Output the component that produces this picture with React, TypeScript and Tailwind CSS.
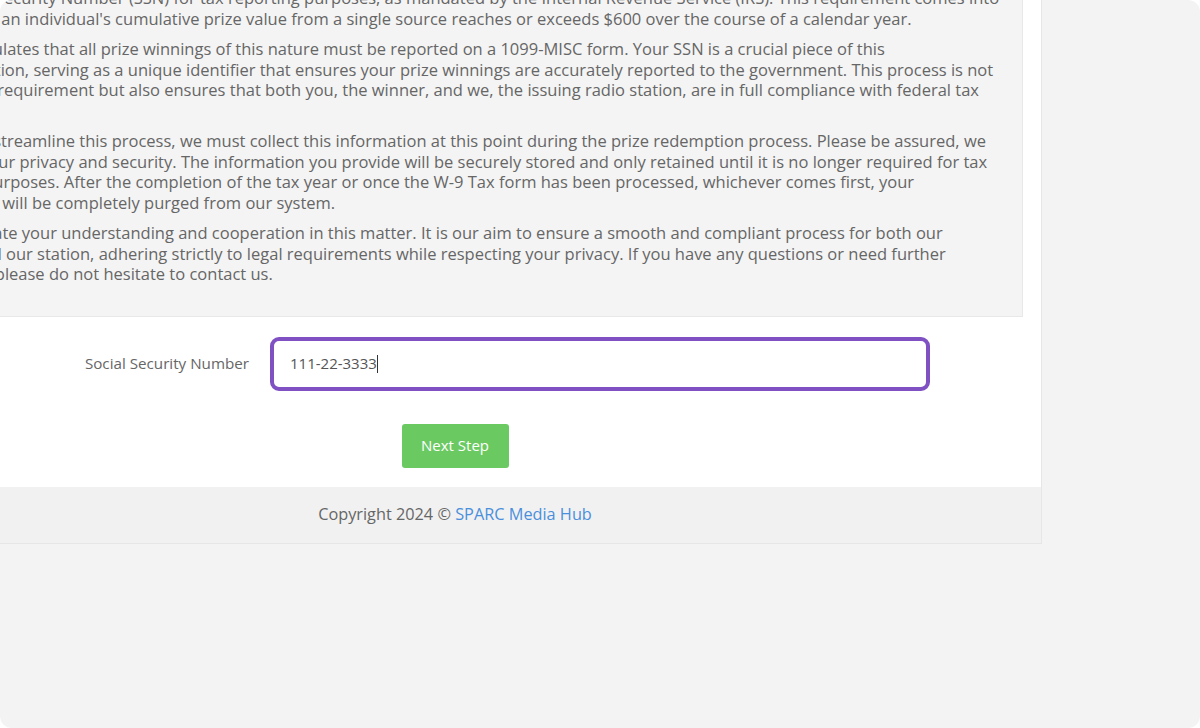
const paragraphs: string[][] = [
  [
    "your Social Security Number (SSN) for tax reporting purposes, as mandated by the Internal Revenue Service (IRS). This requirement comes into",
    "effect when an individual's cumulative prize value from a single source reaches or exceeds $600 over the course of a calendar year.",
  ],
  [
    "The IRS regulates that all prize winnings of this nature must be reported on a 1099-MISC form. Your SSN is a crucial piece of this",
    "documentation, serving as a unique identifier that ensures your prize winnings are accurately reported to the government. This process is not",
    "only a legal requirement but also ensures that both you, the winner, and we, the issuing radio station, are in full compliance with federal tax",
    "laws.",
  ],
  [
    "In order to streamline this process, we must collect this information at this point during the prize redemption process. Please be assured, we",
    "prioritize your privacy and security. The information you provide will be securely stored and only retained until it is no longer required for tax",
    "reporting purposes. After the completion of the tax year or once the W-9 Tax form has been processed, whichever comes first, your",
    "information will be completely purged from our system.",
  ],
  [
    "We appreciate your understanding and cooperation in this matter. It is our aim to ensure a smooth and compliant process for both our",
    "winners and our station, adhering strictly to legal requirements while respecting your privacy. If you have any questions or need further",
    "assistance, please do not hesitate to contact us.",
  ],
];

const NoticeBox = () => (
  <div className="bg-[#f4f4f4] border border-[#e8e8e8] pt-[20px] pb-[21px] pl-[19px] pr-[20px]">
    {paragraphs.map((lines, i) => (
      <p key={i} className="mb-[10px] text-[16.5px] leading-[20.5px] text-[#666]">
        {lines.map((line, j) => (
          <span key={j} className="block whitespace-nowrap">
            {line}
          </span>
        ))}
      </p>
    ))}
  </div>
);

const SsnRow = () => (
  <div className="flex items-center mt-[20px]">
    <label className="w-[383px] pr-[21px] text-right text-[15.2px] text-[#666]">Social Security Number</label>
    <div className="w-[660px] h-[54px] border-[4px] border-[#7f51c2] rounded-[9px] bg-white flex items-center pl-[16px] text-[15px] text-[#555]">
      <span>111-22-3333</span>
      <span className="w-px h-[18px] bg-[#333]" />
    </div>
  </div>
);

export default function App() {
  return (
    <div
      className="h-[728px] bg-[#f3f3f3] overflow-hidden rounded-[12px]"
      style={{ fontFamily: '"Open Sans", "Noto Sans", sans-serif' }}
    >
      <div className="-mt-[51px] ml-[-131px] w-[1173px] bg-white border-r border-b border-[#e6e6e6]">
        <div className="pt-[18px] px-[18px]">
          <NoticeBox />
          <SsnRow />
          <div className="flex justify-center mt-[33px] mb-[19px]">
            <button className="w-[107px] h-[44px] rounded-[3px] bg-[#6bc962] text-white text-[15px]">Next Step</button>
          </div>
        </div>
        <footer className="h-[56px] bg-[#f1f1f1] flex items-center justify-center text-[16.3px] text-[#666]">
          <span>
            Copyright 2024 © <a className="text-[#4a8fdc]">SPARC Media Hub</a>
          </span>
        </footer>
      </div>
    </div>
  );
}
